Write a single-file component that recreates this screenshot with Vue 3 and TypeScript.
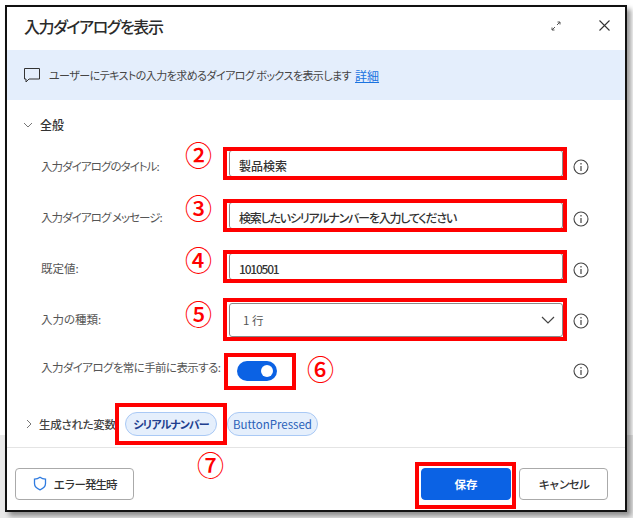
<script setup lang="ts">
interface FieldRow {
  label: string
  value: string
  kind: 'text' | 'select'
  callout: string
  calloutClass: string
  tightLabel: boolean
  tightValue: boolean
}

const rows: FieldRow[] = [
  { label: '入力ダイアログのタイトル:', value: '製品検索', kind: 'text', callout: '②', calloutClass: 'c2', tightLabel: true, tightValue: false },
  { label: '入力ダイアログ メッセージ:', value: '検索したいシリアルナンバーを入力してください', kind: 'text', callout: '③', calloutClass: 'c3', tightLabel: true, tightValue: true },
  { label: '既定値:', value: '1010501', kind: 'text', callout: '④', calloutClass: 'c4', tightLabel: false, tightValue: true },
  { label: '入力の種類:', value: '1 行', kind: 'select', callout: '⑤', calloutClass: 'c5', tightLabel: false, tightValue: false },
]
</script>

<template>
  <div class="stage">
    <section class="dialog">
      <header class="head">
        <h1>入力ダイアログを表示</h1>
        <svg class="expand" width="12" height="12" viewBox="0 0 12 12">
          <path d="M2 10 5 7M7 5l3-3M7.500 2H10v2.500M2 7.500V10h2.500" fill="none" stroke="#555" stroke-width="1" />
        </svg>
        <svg class="close" width="13" height="13" viewBox="0 0 13 13">
          <path d="M1.500 1.500l10 10M11.500 1.500l-10 10" fill="none" stroke="#333" stroke-width="1.100" />
        </svg>
      </header>

      <div class="banner">
        <svg width="16" height="16" viewBox="0 0 16 16">
          <path d="M.5 1.500h15v10.500H5l-3 3v-3H.5z" fill="none" stroke="#333" stroke-width="1" />
        </svg>
        <span>ユーザーにテキストの入力を求めるダイアログ ボックスを表示します</span>
        <a href="#">詳細</a>
      </div>

      <div class="section-title">
        <svg width="10" height="10" viewBox="0 0 10 10"><path d="M1 3l4 4 4-4" fill="none" stroke="#777" stroke-width="1" /></svg>
        <span>全般</span>
      </div>

      <div class="form">
        <div v-for="row in rows" :key="row.label" class="row">
          <label :class="{ tight: row.tightLabel }">{{ row.label }}</label>
          <div class="field" :class="row.kind">
            <span :class="{ tight: row.tightValue }">{{ row.value }}</span>
            <svg v-if="row.kind === 'select'" width="14" height="8" viewBox="0 0 14 8">
              <path d="M1 1l6 6 6-6" fill="none" stroke="#444" stroke-width="1.200" />
            </svg>
            <i class="mark"></i>
          </div>
          <svg class="info" width="16" height="16" viewBox="0 0 16 16">
            <circle cx="8" cy="8" r="7" fill="none" stroke="#444" stroke-width="1.100" />
            <path d="M8 7v5M8 4v1.400" fill="none" stroke="#444" stroke-width="1.200" />
          </svg>
          <b class="callout" :class="row.calloutClass">{{ row.callout }}</b>
        </div>

        <div class="row">
          <label class="wide">入力ダイアログを常に手前に表示する:</label>
          <div class="toggle-cell">
            <div class="toggle"><i></i></div>
            <i class="mark toggle-mark"></i>
          </div>
          <svg class="info flush" width="16" height="16" viewBox="0 0 16 16">
            <circle cx="8" cy="8" r="7" fill="none" stroke="#444" stroke-width="1.100" />
            <path d="M8 7v5M8 4v1.400" fill="none" stroke="#444" stroke-width="1.200" />
          </svg>
          <b class="callout c6">⑥</b>
        </div>
      </div>

      <div class="vars">
        <svg width="10" height="10" viewBox="0 0 10 10"><path d="M3 1l4 4-4 4" fill="none" stroke="#777" stroke-width="1" /></svg>
        <span class="vars-title">生成された変数</span>
        <span class="chip strong">
          シリアルナンバー
          <i class="mark chip-mark"></i>
          <b class="callout c7">⑦</b>
        </span>
        <span class="chip">ButtonPressed</span>
      </div>

      <footer class="foot">
        <button class="btn error">
          <svg width="14" height="15" viewBox="0 0 14 15">
            <path d="M7 1.200c1.800 1.300 3.600 1.800 5.500 1.900v4.400c0 3-2.200 5-5.500 6.300-3.300-1.300-5.500-3.300-5.500-6.300V3.100C3.400 3 5.200 2.500 7 1.200z" fill="none" stroke="#2f7be0" stroke-width="1.300" />
          </svg>
          <span>エラー発生時</span>
        </button>
        <span class="spacer"></span>
        <button class="btn primary">保存<i class="mark save-mark"></i></button>
        <button class="btn cancel">キャンセル</button>
      </footer>
    </section>
  </div>
</template>

<style>
html, body {
  margin: 0;
  background: #fff;
}
</style>

<style scoped>
.stage {
  width: 633px;
  height: 518px;
  box-sizing: border-box;
  padding: 5px;
  background: linear-gradient(#fff 435px, #e9e9e9 435px);
  overflow: hidden;
  font-family: "Noto Sans CJK JP", "Noto Sans", sans-serif;
  font-feature-settings: "palt";
  color: #333;
}

.dialog {
  width: 622px;
  height: 507px;
  box-sizing: border-box;
  border: 2px solid #111;
  background: #fff;
  display: flex;
  flex-direction: column;
  box-shadow: 4px 4px 5px rgba(0, 0, 0, .4);
}

.head {
  height: 43px;
  flex: none;
  display: flex;
  align-items: center;
  padding: 0 14px 0 17px;
}

.head h1 {
  flex: 1;
  margin: -6px 0 0;
  font-size: 16px;
  font-weight: 500;
  letter-spacing: -1.400px;
  color: #2b2b2b;
}

.expand {
  margin-right: 36px;
  margin-top: -5px;
}

.close {
  margin-top: -6px;
}

.banner {
  height: 50px;
  flex: none;
  background: #e4eefc;
  display: flex;
  align-items: center;
  padding-left: 17px;
  font-size: 11px;
  color: #444;
}

.banner span {
  margin-left: 9px;
  letter-spacing: -.55px;
}

.banner a {
  margin-left: 4px;
  font-size: 12px;
  color: #1a73e0;
  text-decoration: underline;
}

.section-title {
  height: 41px;
  box-sizing: border-box;
  padding: 16px 0 0 16px;
  flex: none;
  display: flex;
  align-items: flex-start;
  font-size: 12px;
  font-weight: 500;
  color: #333;
}

.section-title svg {
  margin-top: 4px;
}

.section-title span {
  margin-left: 7px;
  line-height: 18px;
}

.form {
  flex: none;
  display: grid;
  grid-template-rows: 52px 51px 51px 51px 50px;
}

.row {
  display: flex;
  align-items: center;
  padding-left: 34px;
  position: relative;
}

.row label {
  width: 188px;
  flex: none;
  margin-bottom: 3px;
  font-size: 11.500px;
  color: #555;
  white-space: nowrap;
}

.row label.tight {
  letter-spacing: -.95px;
}

.row label.wide {
  width: 183px;
  margin-bottom: 9px;
  letter-spacing: -.6px;
}

.field {
  position: relative;
  width: 334px;
  height: 27px;
  flex: none;
  box-sizing: border-box;
  margin-bottom: 7px;
  padding: 4px 0 0 9px;
  border: 1px solid #8a8a8a;
  border-radius: 3px;
  display: flex;
  align-items: center;
  font-size: 12px;
  font-weight: 500;
  color: #333;
}

.field .tight {
  letter-spacing: -1.200px;
}

.field.select {
  height: 34px;
  margin-bottom: 1px;
  padding: 0 7px 0 13px;
  font-size: 11.500px;
  font-weight: 400;
  justify-content: space-between;
  color: #555;
}

.info {
  flex: none;
  margin-left: 10px;
}

.info.flush {
  margin-left: 0;
}

.toggle-cell {
  position: relative;
  width: 349px;
  height: 37px;
  flex: none;
  display: flex;
  align-items: center;
}

.toggle {
  width: 40px;
  height: 20px;
  margin-left: 13px;
  border-radius: 10px;
  background: #0b62e4;
  display: flex;
  align-items: center;
  justify-content: flex-end;
  padding-right: 4px;
  box-sizing: border-box;
}

.toggle i {
  width: 12px;
  height: 12px;
  border-radius: 50%;
  background: #fff;
}

.mark {
  position: absolute;
  top: -4px;
  right: -5px;
  bottom: -4px;
  left: -7px;
  border: 4px solid #f00;
  pointer-events: none;
}

.select .mark {
  top: -6px;
  bottom: -5px;
}

.toggle-mark {
  inset: 0 auto 0 0;
  width: 72px;
  box-sizing: border-box;
}

.callout {
  position: absolute;
  left: 178px;
  color: #f00;
  font-size: 27px;
  font-weight: 500;
  letter-spacing: 0;
  line-height: 1;
  font-feature-settings: normal;
}

.c2 { top: 0; }
.c3 { top: 1px; }
.c4 { top: 2px; }
.c5 { top: 5px; }
.c6 { left: 300px; top: 9px; }
.c7 { left: 71px; top: 38px; }

.vars {
  height: 51px;
  box-sizing: border-box;
  padding: 5px 0 0 17px;
  flex: none;
  display: flex;
  align-items: center;
  font-size: 11.500px;
}

.vars-title {
  width: 76px;
  flex: none;
  margin-left: 5px;
  font-weight: 500;
  letter-spacing: -.3px;
  color: #444;
  white-space: nowrap;
}

.chip {
  position: relative;
  box-sizing: border-box;
  width: 91px;
  height: 24px;
  margin-left: 10px;
  display: flex;
  align-items: center;
  justify-content: center;
  white-space: nowrap;
  border: 1px solid #a9c9f5;
  border-radius: 12px;
  background: #e5effc;
  color: #2a5fb8;
  font-size: 11.500px;
}

.chip.strong {
  width: 92px;
  font-size: 11px;
  font-weight: 700;
  letter-spacing: -.9px;
  color: #1f3f8f;
}

.chip-mark {
  inset: -10px -11px -10px -11px;
}

.foot {
  flex: 1;
  display: flex;
  align-items: center;
  border-top: 1px solid #e4e4e4;
  padding: 9px 17px 0 8px;
}

.spacer {
  flex: 1;
}

.btn {
  position: relative;
  height: 32px;
  box-sizing: border-box;
  border: 1px solid #aaa;
  border-radius: 4px;
  background: #fff;
  display: flex;
  align-items: center;
  justify-content: center;
  font-family: inherit;
  font-size: 11.500px;
  font-weight: 500;
  color: #333;
  padding: 0;
}

.error {
  width: 119px;
  gap: 7px;
  letter-spacing: -1px;
}

.primary {
  width: 90px;
  background: #0b62e4;
  border-color: #0b62e4;
  color: #fff;
  font-weight: 700;
  margin-right: 8px;
}

.save-mark {
  inset: -7px -6px -10px -7px;
}

.cancel {
  width: 89px;
  letter-spacing: -1.500px;
}
</style>
